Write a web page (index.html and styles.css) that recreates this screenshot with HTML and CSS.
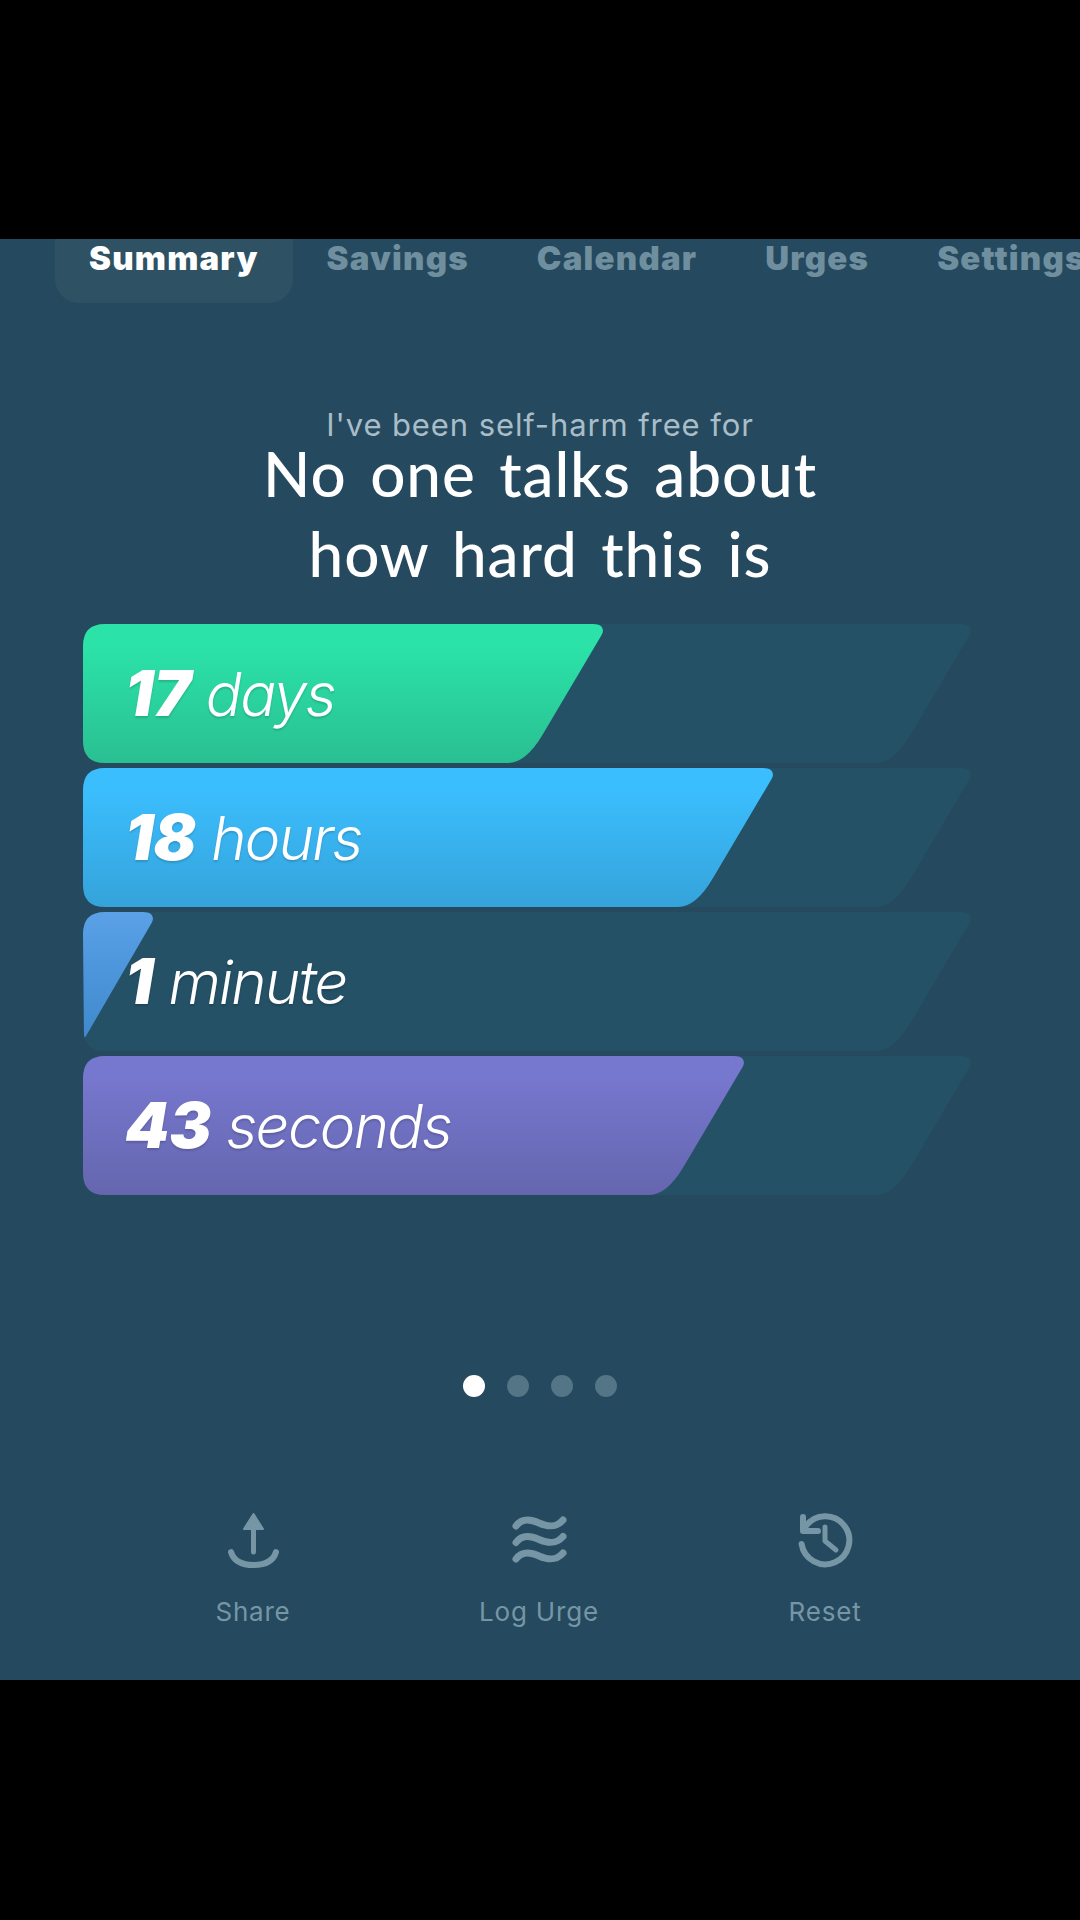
FILE: index.html
```html
<!DOCTYPE html>
<html lang="en">
<head>
    <meta charset="UTF-8">
    <meta name="viewport" content="width=device-width, initial-scale=1.0">
    <title>Summary</title>
    <link rel="stylesheet" href="styles.css">
</head>
<body>
    <div class="letterbox-top"></div>

    <div class="screen">
        <nav class="tabs">
            <a class="tab active">Summary</a>
            <a class="tab">Savings</a>
            <a class="tab">Calendar</a>
            <a class="tab">Urges</a>
            <a class="tab">Settings</a>
        </nav>

        <p class="subtitle">I've been self-harm free for</p>
        <h1 class="caption">
            <span class="caption-line">No one talks about</span>
            <span class="caption-line">how hard this is</span>
        </h1>

        <svg class="defs" width="0" height="0">
            <defs>
                <linearGradient id="green" x1="0" y1="0" x2="0" y2="1"><stop offset="0.15" stop-color="#2be3a8"/><stop offset="1" stop-color="#2abf92"/></linearGradient>
                <linearGradient id="blue" x1="0" y1="0" x2="0" y2="1"><stop offset="0.15" stop-color="#3bbefe"/><stop offset="1" stop-color="#35a3da"/></linearGradient>
                <linearGradient id="sky" x1="0" y1="0" x2="0" y2="1"><stop offset="0" stop-color="#5aa1e8"/><stop offset="1" stop-color="#3f89cc"/></linearGradient>
                <linearGradient id="violet" x1="0" y1="0" x2="0" y2="1"><stop offset="0.15" stop-color="#7677ce"/><stop offset="1" stop-color="#6566ae"/></linearGradient>
            </defs>
        </svg>

        <div class="bars">
            <div class="bar">
                <svg class="bar-art" viewBox="0 0 892 139">
                    <path class="track" d="M22 0H878C888 0 890 6 886 12L828 110Q811 139 793 139H22Q0 139 0 117V22Q0 0 22 0Z"/>
                    <path fill="url(#green)" d="M22 0H510C520 0 522 6 518 12L460 110Q443 139 425 139H22Q0 139 0 117V22Q0 0 22 0Z"/>
                </svg>
                <span class="count">17</span> <span class="unit">days</span>
            </div>
            <div class="bar">
                <svg class="bar-art" viewBox="0 0 892 139">
                    <path class="track" d="M22 0H878C888 0 890 6 886 12L828 110Q811 139 793 139H22Q0 139 0 117V22Q0 0 22 0Z"/>
                    <path fill="url(#blue)" d="M22 0H680C690 0 692 6 688 12L630 110Q613 139 595 139H22Q0 139 0 117V22Q0 0 22 0Z"/>
                </svg>
                <span class="count">18</span> <span class="unit">hours</span>
            </div>
            <div class="bar">
                <svg class="bar-art" viewBox="0 0 892 139">
                    <path class="track" d="M22 0H878C888 0 890 6 886 12L828 110Q811 139 793 139H22Q0 139 0 117V22Q0 0 22 0Z"/>
                    <path fill="url(#sky)" d="M22 0H60C70 0 72 6 68 12L3 124Q1 128 1 120L0 22Q0 0 22 0Z"/>
                </svg>
                <span class="count">1</span> <span class="unit">minute</span>
            </div>
            <div class="bar">
                <svg class="bar-art" viewBox="0 0 892 139">
                    <path class="track" d="M22 0H878C888 0 890 6 886 12L828 110Q811 139 793 139H22Q0 139 0 117V22Q0 0 22 0Z"/>
                    <path fill="url(#violet)" d="M22 0H651C661 0 663 6 659 12L601 110Q584 139 566 139H22Q0 139 0 117V22Q0 0 22 0Z"/>
                </svg>
                <span class="count">43</span> <span class="unit">seconds</span>
            </div>
        </div>

        <div class="dots">
            <span class="dot on"></span>
            <span class="dot"></span>
            <span class="dot"></span>
            <span class="dot"></span>
        </div>

        <div class="actions">
            <div class="action">
                <svg class="icon" viewBox="0 0 55 55">
                    <path class="solid" d="M27.500 1L37 16H18Z"/>
                    <path class="thin" d="M27.500 12V39"/>
                    <path d="M5 39Q9 52 27.500 52T50 39"/>
                </svg>
                <span>Share</span>
            </div>
            <div class="action">
                <svg class="icon wave" viewBox="0 0 55 55">
                    <path d="M4 13C10 5 18 6 27 10S44 15 51 7"/>
                    <path d="M4 29.500C10 21.500 18 22.500 27 26.500S44 31.500 51 23.500"/>
                    <path d="M4 46C10 38 18 39 27 43S44 48 51 40"/>
                </svg>
                <span>Log Urge</span>
            </div>
            <div class="action">
                <svg class="icon" viewBox="0 0 55 55">
                    <path d="M8 13A24 24 0 1 1 3.600 31"/>
                    <path d="M5 4V18H20"/>
                    <path class="thin" d="M27 14V28L38 37"/>
                </svg>
                <span>Reset</span>
            </div>
        </div>
    </div>

    <div class="letterbox-bottom"></div>
</body>
</html>
```

FILE: styles.css
```css
body {
    margin: 0;
    background-color: #000;
    font-family: Inter, "Liberation Sans", sans-serif;
    width: 1080px;
    height: 1920px;
    overflow: hidden;
}
.letterbox-top {
    height: 239px;
}
.letterbox-bottom {
    height: 240px;
}
.screen {
    height: 1441px;
    background-color: #25495e;
    overflow: hidden;
}
.defs {
    display: block;
}

/* tabs */
.tabs {
    display: flex;
    padding-left: 55px;
    white-space: nowrap;
}
.tab {
    padding: 1px 34px 0;
    height: 63px;
    font-size: 33px;
    line-height: 36px;
    font-weight: 900;
    letter-spacing: 1.200px;
    color: #6f8f9e;
}
.tab.active {
    color: #fff;
    background-color: #2e5164;
    border-radius: 0 0 24px 24px;
}

/* headline */
.subtitle {
    margin: 105px 0 0;
    text-align: center;
    font-size: 31px;
    line-height: 34px;
    letter-spacing: 0.9px;
    color: #a9bdc8;
}
.caption {
    margin: 0;
    display: flex;
    flex-direction: column;
    gap: 18px;
    text-align: center;
    font-family: Lato, sans-serif;
    font-size: 62px;
    line-height: 62px;
    font-weight: 500;
    letter-spacing: 0.900px;
    word-spacing: 7px;
    color: #fff;
}

/* bars */
.bars {
    display: flex;
    flex-direction: column;
    gap: 5px;
    margin: 40px 0 0 83px;
}
.bar {
    position: relative;
    width: 892px;
    height: 139px;
    padding-left: 42px;
    box-sizing: border-box;
    line-height: 139px;
    font-style: italic;
    font-size: 60px;
    color: #fff;
    text-shadow: 0 2px 2px rgba(0, 0, 0, 0.15);
}
.bar-art {
    position: absolute;
    left: 0;
    top: 0;
    width: 892px;
    height: 139px;
}
.track {
    fill: #245166;
}
.count {
    position: relative;
    font-size: 63px;
    font-weight: 900;
    margin-right: -2px;
}
.unit {
    position: relative;
    font-weight: 300;
    letter-spacing: -1.700px;
}

/* pager */
.dots {
    display: flex;
    justify-content: center;
    gap: 22px;
    margin-top: 180px;
}
.dot {
    width: 22px;
    height: 22px;
    border-radius: 50%;
    background-color: #537586;
}
.dot.on {
    background-color: #fff;
}

/* bottom actions */
.actions {
    display: flex;
    margin: 116px 0 0 110px;
}
.action {
    width: 286px;
    display: flex;
    flex-direction: column;
    align-items: center;
    gap: 28px;
    font-size: 26px;
    line-height: 32px;
    letter-spacing: 0.8px;
    color: #7696a6;
}
.icon {
    width: 55px;
    height: 55px;
    fill: none;
    stroke: #7696a6;
    stroke-width: 6;
    stroke-linecap: round;
    stroke-linejoin: round;
}
.icon .solid {
    fill: #7696a6;
    stroke-width: 2;
}
.icon .thin {
    stroke-width: 5;
}
.icon.wave {
    stroke-width: 7;
}
```
